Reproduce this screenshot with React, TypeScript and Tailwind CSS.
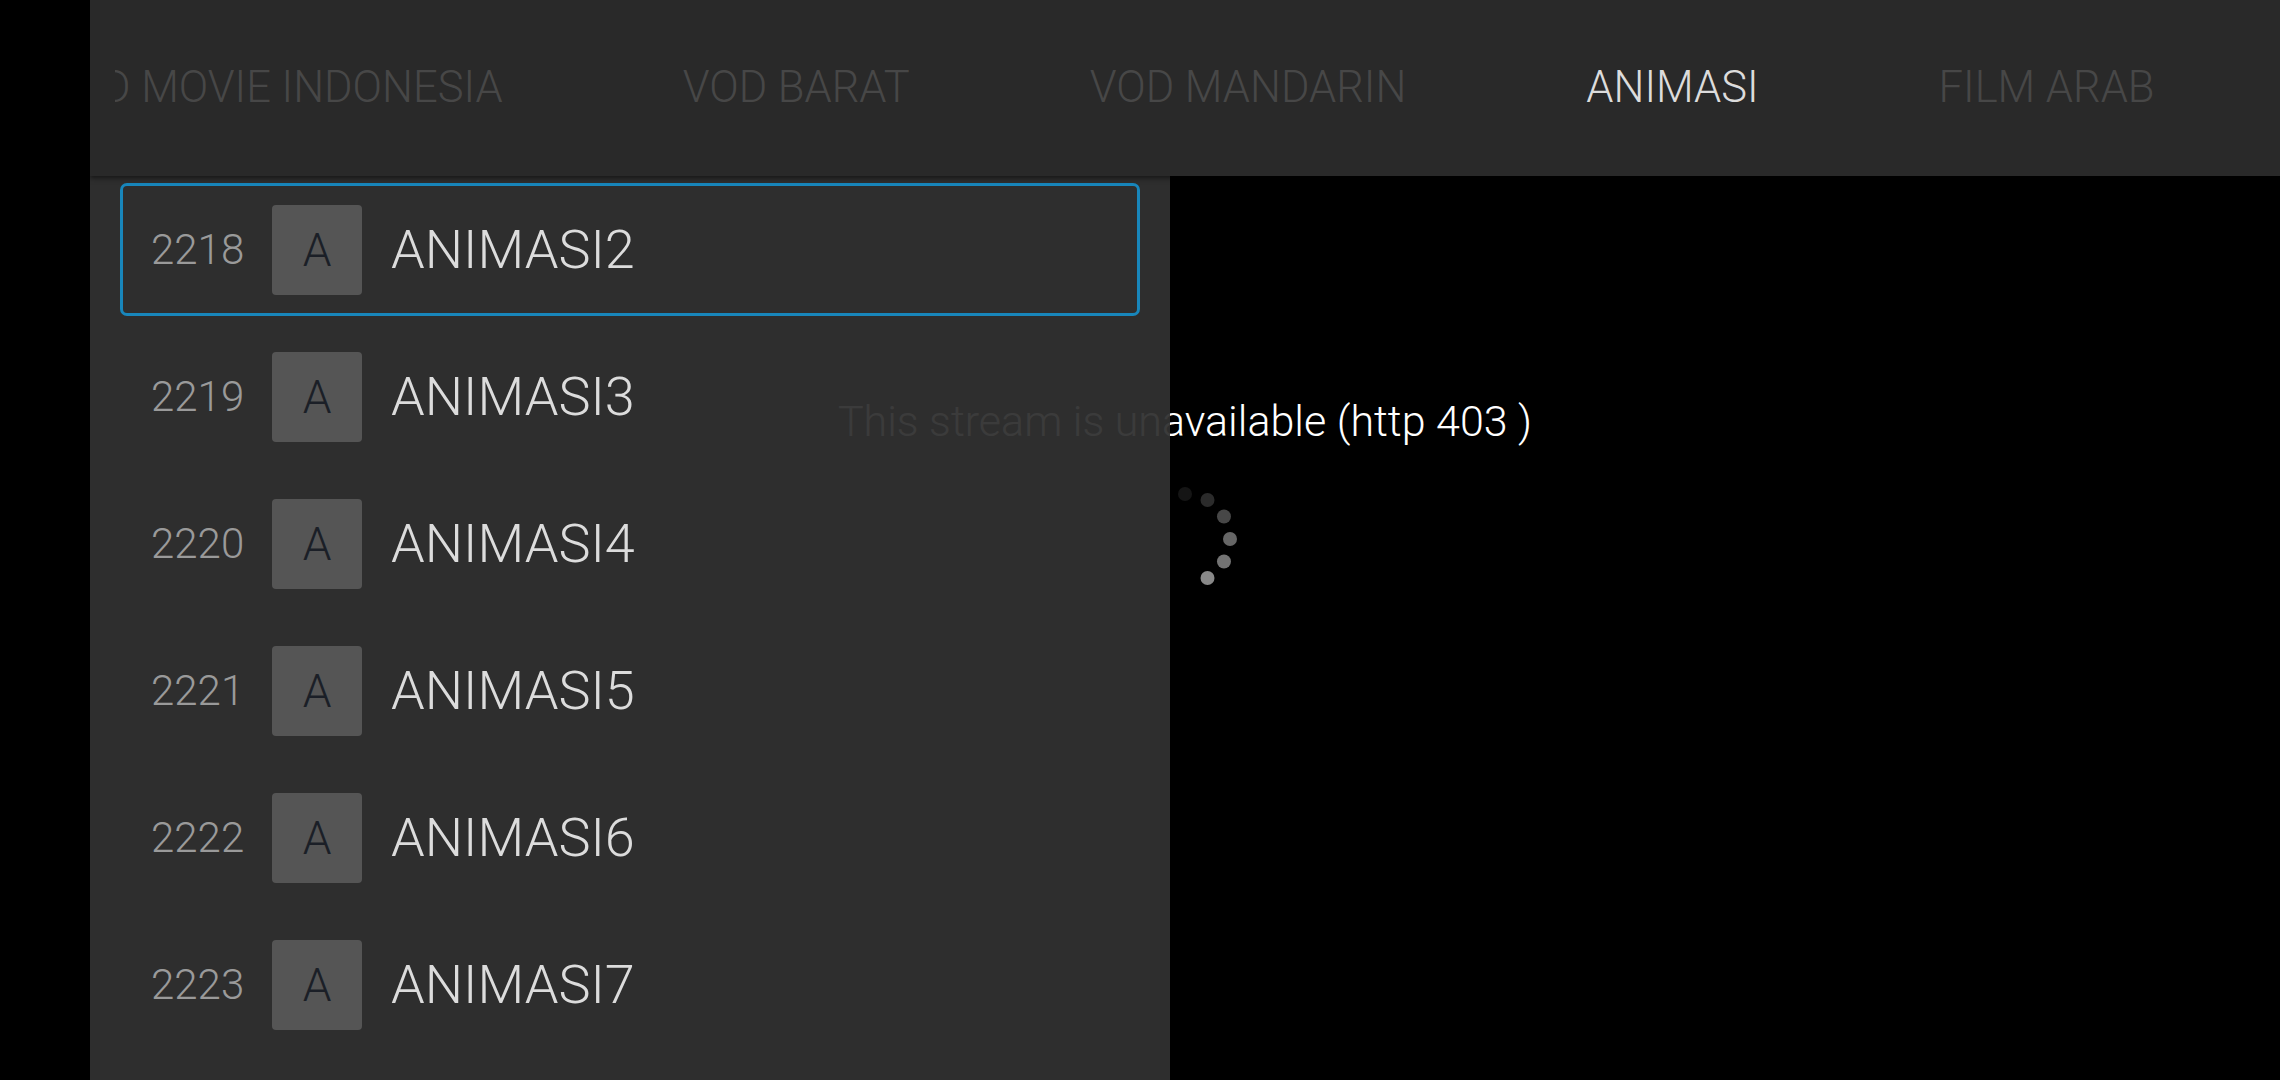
import React from 'react'

const tabs = ['VOD MOVIE INDONESIA', 'VOD BARAT', 'VOD MANDARIN', 'ANIMASI', 'FILM ARAB']
const active = 'ANIMASI'

const channels = [
  { num: 2218, name: 'ANIMASI2' },
  { num: 2219, name: 'ANIMASI3' },
  { num: 2220, name: 'ANIMASI4' },
  { num: 2221, name: 'ANIMASI5' },
  { num: 2222, name: 'ANIMASI6' },
  { num: 2223, name: 'ANIMASI7' },
]

// loading dots, brightest last
const dots = [
  { a: -90, c: '#151515' },
  { a: -60, c: '#2b2b2b' },
  { a: -30, c: '#474747' },
  { a: 0, c: '#666666' },
  { a: 30, c: '#737373' },
  { a: 60, c: '#888888' },
]

function Spinner() {
  return (
    <svg width="120" height="120" viewBox="0 0 120 120">
      {dots.map((d) => {
        const r = (d.a * Math.PI) / 180
        return <circle key={d.a} cx={60 + 45 * Math.cos(r)} cy={60 + 45 * Math.sin(r)} r="7" fill={d.c} />
      })}
    </svg>
  )
}

function ChannelRow({ num, name, selected }: { num: number; name: string; selected: boolean }) {
  return (
    <div className="h-[147px] px-[30px] py-[7px]">
      <div
        className={`h-full flex items-center pl-[28px] rounded-[7px] border-[3px] ${
          selected ? 'border-[#1886bb]' : 'border-transparent'
        }`}
      >
        <span className="w-[92px] text-[42px] text-[#9a9a9a] leading-none">{num}</span>
        <div className="ml-[29px] w-[90px] h-[90px] rounded-[4px] bg-[#555555] flex items-center justify-center">
          <span className="text-[46px] text-[#1b1f27] leading-none">A</span>
        </div>
        <span className="ml-[29px] text-[54px] text-[#dcdcdc] leading-none">{name}</span>
      </div>
    </div>
  )
}

export default function App() {
  return (
    <div className="w-[2280px] h-[1080px] bg-black flex overflow-hidden font-['Roboto',sans-serif] font-light">
      <div className="w-[90px] shrink-0 bg-black" />

      <div className="relative flex-1 h-full bg-black">
        {/* video area */}
        <div className="h-full flex flex-col items-center pt-[396px]">
          <p className="text-[43px] leading-[50px] text-white">This stream is unavailable (http 403 )</p>
          <div className="mt-[33px]">
            <Spinner />
          </div>
        </div>

        {/* category bar */}
        <div className="absolute top-0 left-0 right-0 h-[176px] bg-[#292929] shadow-[0_2px_5px_rgba(0,0,0,0.55)] z-20 flex items-center pl-[25px]">
          <div className="h-full flex-1 overflow-hidden flex items-center">
            <div className="flex items-center gap-[180px] ml-[-69px] whitespace-nowrap">
              {tabs.map((t) => (
                <span
                  key={t}
                  className={`text-[43.5px] leading-none ${t === active ? 'text-[#dcdcdc]' : 'text-[#474747]'}`}
                >
                  {t}
                </span>
              ))}
            </div>
          </div>
        </div>

        {/* channel list */}
        <div className="absolute top-[176px] left-0 bottom-0 w-[1080px] bg-[rgba(48,48,48,0.95)] z-10">
          {channels.map((c, i) => (
            <ChannelRow key={c.num} num={c.num} name={c.name} selected={i === 0} />
          ))}
        </div>
      </div>
    </div>
  )
}
